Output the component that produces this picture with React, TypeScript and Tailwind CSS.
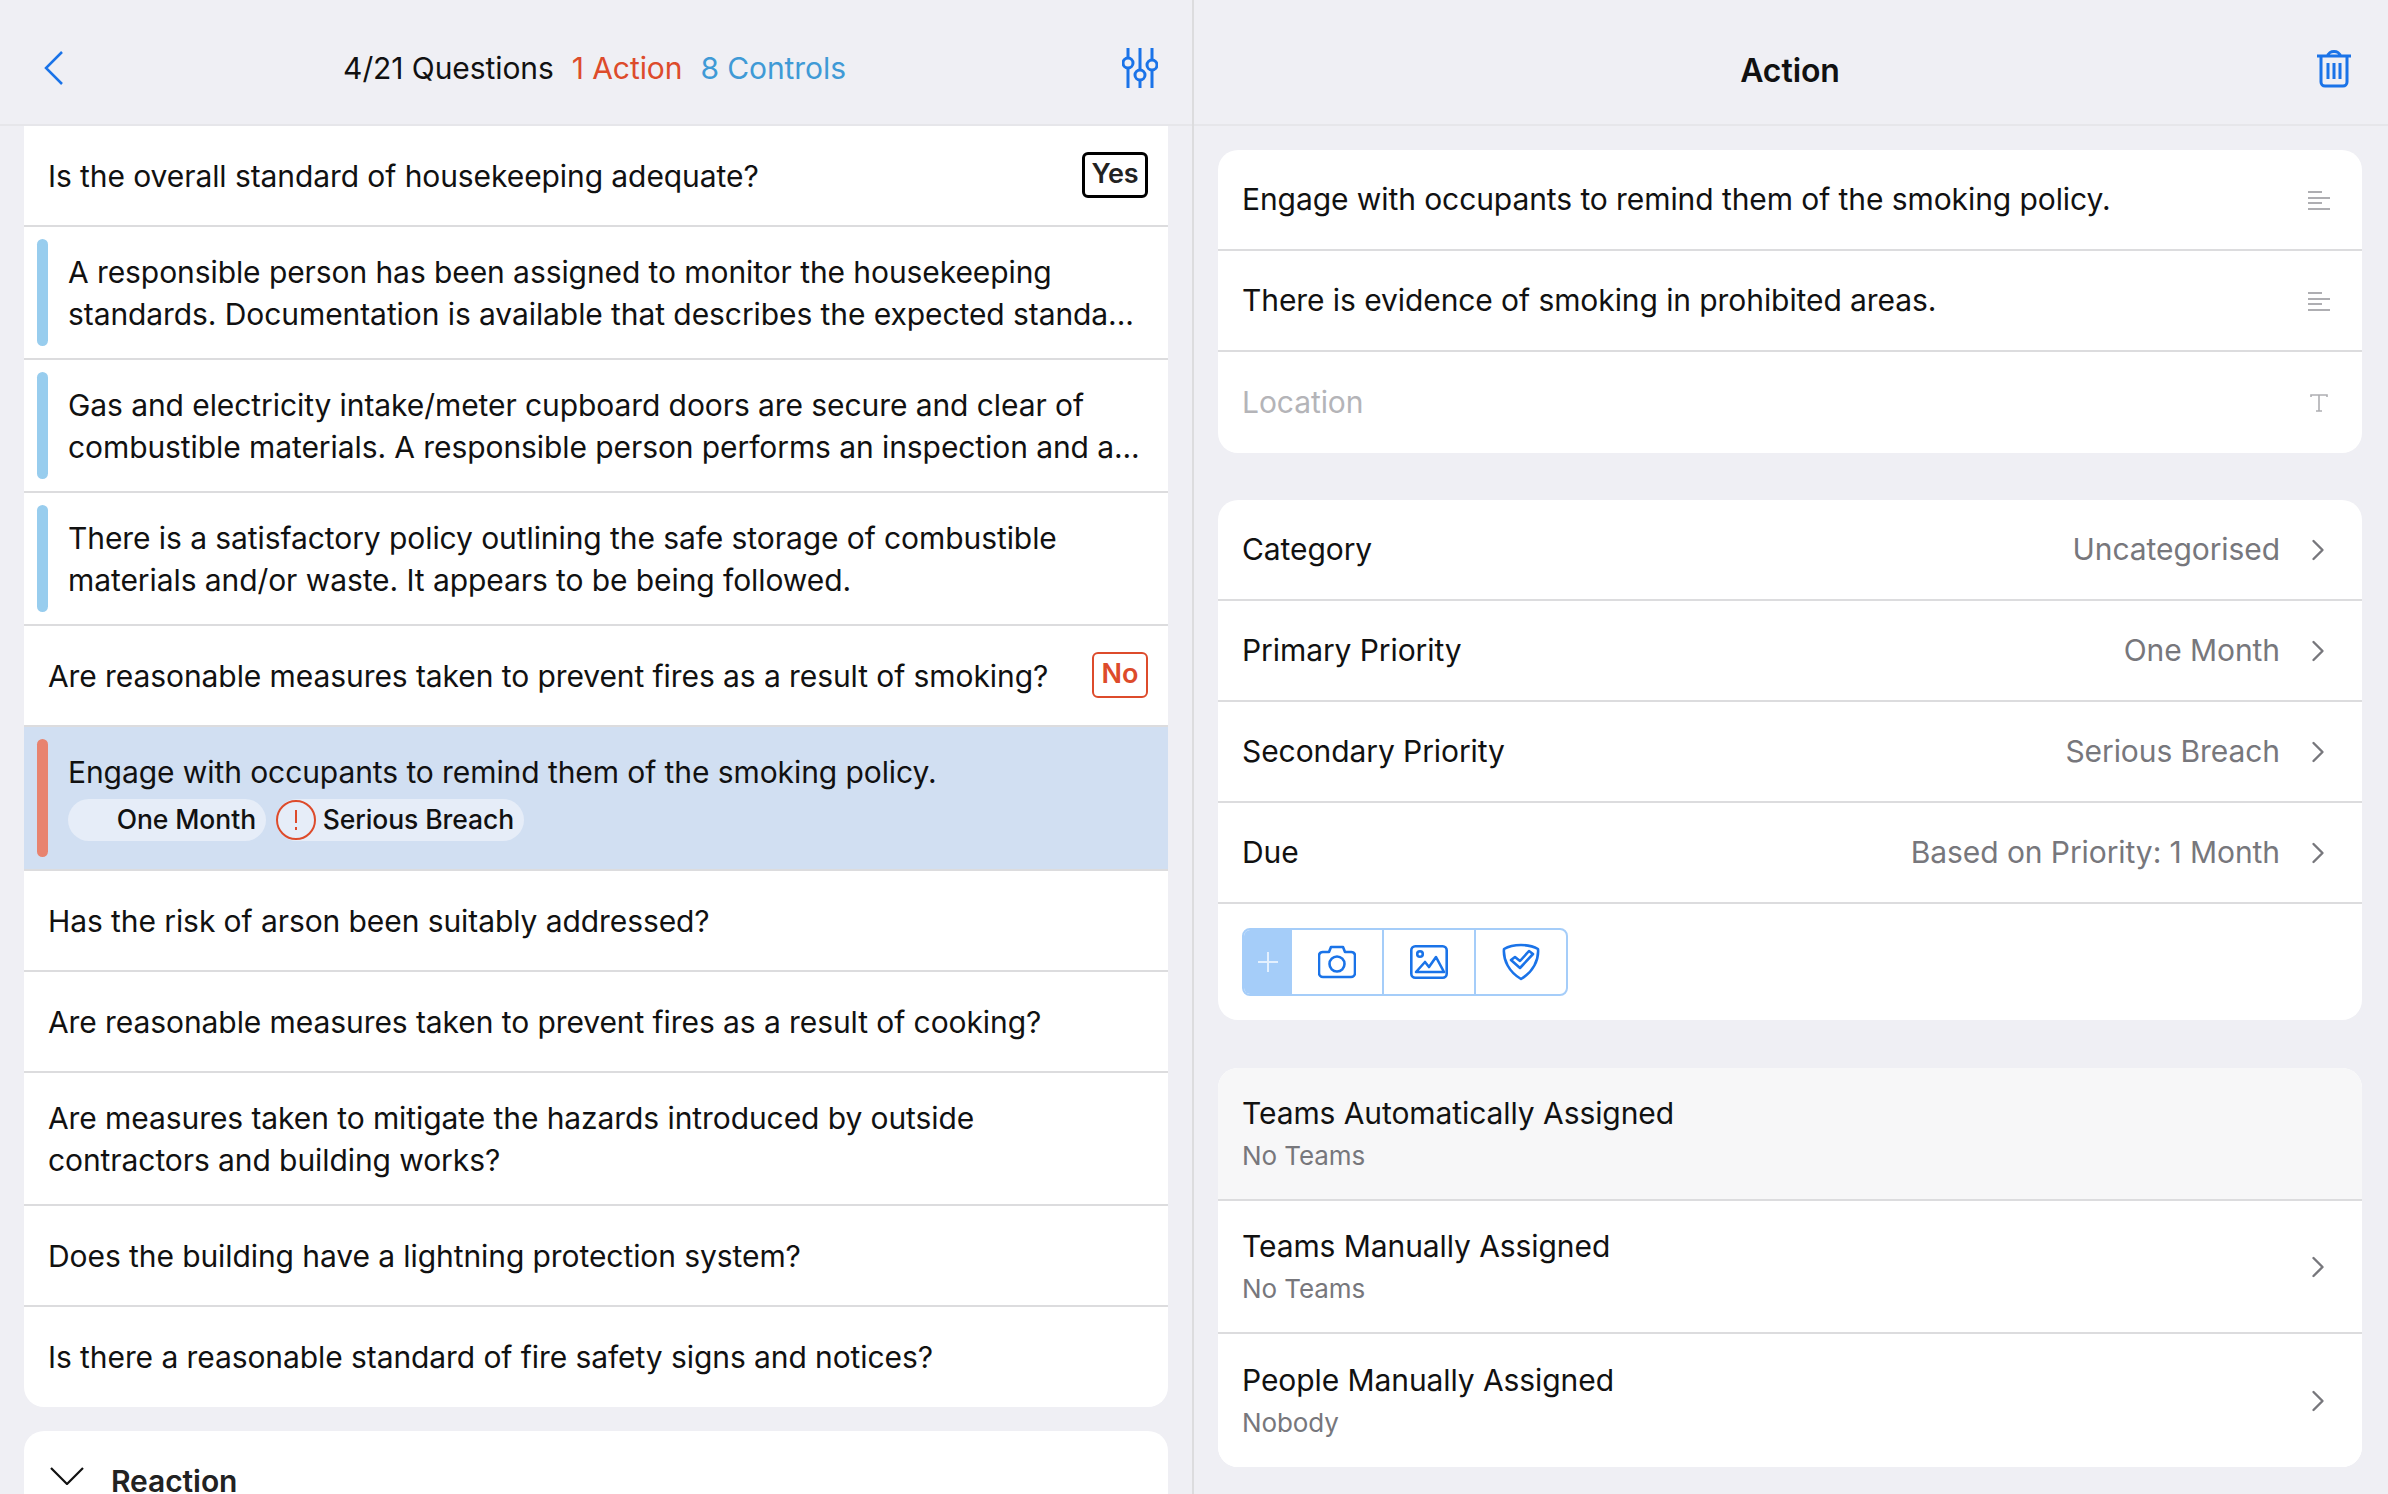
import { ChevronRight } from 'lucide-react';

const font = { fontFamily: 'Inter, "Noto Sans", sans-serif', letterSpacing: '-0.08px' };

function BarRow({ color, children, h = 'h-[133px]', bg = 'bg-white' }: { color: string; children: React.ReactNode; h?: string; bg?: string }) {
  return (
    <div className={`flex ${h} ${bg} items-stretch gap-[20px] border-b-2 border-[#dcdcde] py-[12px] pl-[13px] pr-[24px]`}>
      <div className={`w-[11px] shrink-0 rounded-full ${color}`} />
      {children}
    </div>
  );
}

function Question({ text, answer }: { text: string; answer?: 'Yes' | 'No' }) {
  return (
    <div className="flex h-[101px] items-center justify-between border-b-2 border-[#dcdcde] pl-[24px] pr-[20px] last:border-b-0">
      <p className="text-[30px] leading-[42px] text-[#111]">{text}</p>
      {answer === 'Yes' && (
        <span className="flex h-[46px] w-[66px] -translate-y-px items-center justify-center rounded-[6px] border-[3px] border-black text-[27px] font-semibold text-[#222]">Yes</span>
      )}
      {answer === 'No' && (
        <span className="flex h-[46px] w-[56px] -translate-y-px items-center justify-center rounded-[6px] border-[2.5px] border-[#dd4b2b] text-[27px] font-semibold text-[#dd4b2b]">No</span>
      )}
    </div>
  );
}

function Control({ lines }: { lines: string[] }) {
  return (
    <BarRow color="bg-[#98cdee]">
      <div className="flex flex-col justify-center text-[30px] leading-[42px] text-[#111]">
        {lines.map((l) => (
          <p key={l} className="whitespace-nowrap">{l}</p>
        ))}
      </div>
    </BarRow>
  );
}

function FieldRow({ text, muted, icon }: { text: string; muted?: boolean; icon: 'lines' | 'type' }) {
  return (
    <div className="flex h-[101px] items-center justify-between border-b-2 border-[#dcdcde] pl-[24px] pr-[32px] last:border-b-0">
      <p className={`text-[30px] ${muted ? 'text-[#b4b4b8]' : 'text-[#111]'}`}>{text}</p>
      {icon === 'lines' ? (
        <svg width="22" height="20" viewBox="0 0 22 20" stroke="#aeaeb2" strokeWidth="2">
          <path d="M0 2h14M0 8h22M0 13h14M0 19h22" />
        </svg>
      ) : (
        <svg width="18" height="18" viewBox="0 0 18 18" stroke="#aeaeb2" strokeWidth="1.6" fill="none" className="mr-[2px]">
          <path d="M1 3V1h16v2M9 1v16M6 17h6" />
        </svg>
      )}
    </div>
  );
}

function ValueRow({ label, value }: { label: string; value: string }) {
  return (
    <div className="flex h-[101px] items-center justify-between border-b-2 border-[#dcdcde] pl-[24px] pr-[26px]">
      <p className="text-[30px] text-[#111]">{label}</p>
      <div className="flex items-center gap-[20px]">
        <p className="text-[30px] text-[#77777c]">{value}</p>
        <ChevronRight size={36} strokeWidth={1.6} className="text-[#77777c]" />
      </div>
    </div>
  );
}

function TeamRow({ title, sub, chevron, bg = 'bg-white' }: { title: string; sub: string; chevron?: boolean; bg?: string }) {
  return (
    <div className={`flex h-[133px] items-center justify-between border-b-2 border-[#dcdcde] pl-[24px] pr-[26px] last:border-b-0 ${bg}`}>
      <div>
        <p className="text-[30px] leading-[42px] text-[#111]">{title}</p>
        <p className="mt-[2px] text-[26px] leading-[40px] text-[#77777c]">{sub}</p>
      </div>
      {chevron && <ChevronRight size={36} strokeWidth={1.6} className="text-[#77777c]" />}
    </div>
  );
}

export default function App() {
  return (
    <div className="flex h-[1494px] w-[2388px] overflow-hidden bg-[#efeff4]" style={font}>
      {/* left pane */}
      <div className="flex w-[1194px] shrink-0 flex-col border-r-2 border-[#dcdcde]">
        <header className="flex h-[126px] shrink-0 items-center justify-between border-b-2 border-[#e6e6ea] pl-[44px] pr-[34px] pt-[12px]">
          <svg width="20" height="36" viewBox="0 0 20 36" fill="none" stroke="#1a73e8" strokeWidth="2.5">
            <path d="M18 2 2 18l16 16" />
          </svg>
          <div className="ml-[3px] flex items-center gap-[18px] text-[30px] text-[#111]">
            <span>4/21 Questions</span>
            <span className="text-[#dd4b2b]">1 Action</span>
            <span className="text-[#3f9ad6]">8 Controls</span>
          </div>
          <svg width="36" height="40" viewBox="0 0 36 40" fill="none" stroke="#1a73e8" strokeWidth="3">
            <path d="M6 0v10M6 20v20M18 0v22M18 32v8M30 0v12M30 22v18" />
            <circle cx="6" cy="15" r="5" />
            <circle cx="18" cy="27" r="5" />
            <circle cx="30" cy="17" r="5" />
          </svg>
        </header>
        <div className="mx-[24px] flex flex-col rounded-b-[20px] bg-white">
          <Question text="Is the overall standard of housekeeping adequate?" answer="Yes" />
          <Control lines={['A responsible person has been assigned to monitor the housekeeping', 'standards. Documentation is available that describes the expected standa...']} />
          <Control lines={['Gas and electricity intake/meter cupboard doors are secure and clear of', 'combustible materials. A responsible person performs an inspection and a...']} />
          <Control lines={['There is a satisfactory policy outlining the safe storage of combustible', 'materials and/or waste. It appears to be being followed.']} />
          <Question text="Are reasonable measures taken to prevent fires as a result of smoking?" answer="No" />
          <BarRow color="bg-[#e8836f]" h="h-[144px]" bg="bg-[#d1dff2]">
            <div className="flex flex-col justify-center pb-[5px]">
              <p className="text-[30px] leading-[42px] text-[#111]">Engage with occupants to remind them of the smoking policy.</p>
              <div className="mt-[6px] flex items-center gap-[10px]">
                <span className="flex h-[42px] w-[198px] items-center justify-end rounded-full bg-[#e6edf8] pr-[10px] text-[26.5px] font-medium text-[#111]">One Month</span>
                <span className="relative flex h-[42px] w-[248px] items-center justify-end rounded-full bg-[#e6edf8] pr-[10px] text-[26.5px] font-medium text-[#111]">
                  <span className="absolute left-0 top-px flex h-[40px] w-[40px] items-center justify-center rounded-full border-[2.5px] border-[#dd4b2b] bg-transparent">
                    <span className="flex h-[20px] flex-col items-center justify-between">
                      <span className="h-[13px] w-[2px] bg-[#dd4b2b]" />
                      <span className="h-[3px] w-[2px] bg-[#dd4b2b]" />
                    </span>
                  </span>
                  Serious Breach
                </span>
              </div>
            </div>
          </BarRow>
          <Question text="Has the risk of arson been suitably addressed?" />
          <Question text="Are reasonable measures taken to prevent fires as a result of cooking?" />
          <div className="flex h-[133px] flex-col justify-center border-b-2 border-[#dcdcde] pl-[24px] text-[30px] leading-[42px] text-[#111]">
            <p>Are measures taken to mitigate the hazards introduced by outside</p>
            <p>contractors and building works?</p>
          </div>
          <Question text="Does the building have a lightning protection system?" />
          <div className="-mt-px">
            <Question text="Is there a reasonable standard of fire safety signs and notices?" />
          </div>
        </div>
        <div className="mx-[24px] mt-[24px] flex flex-1 items-start gap-[27px] rounded-t-[20px] bg-white pl-[26px] pt-[28px]">
          <svg width="34" height="18" viewBox="0 0 34 18" fill="none" stroke="#111" strokeWidth="2.2" className="mt-[8px]">
            <path d="M1 1l16 16L33 1" />
          </svg>
          <p className="text-[30px] font-semibold text-[#222]">Reaction</p>
        </div>
      </div>

      {/* right pane */}
      <div className="flex min-w-0 flex-1 flex-col">
        <header className="relative flex h-[126px] shrink-0 items-center justify-center border-b-2 border-[#e6e6ea] pr-[2px] pt-[18px]">
          <p className="text-[32px] font-semibold text-[#111]">Action</p>
          <svg width="34" height="38" viewBox="0 0 34 38" fill="none" stroke="#1a73e8" strokeWidth="3" className="absolute right-[37px] top-[50px]">
            <path d="M0 6h34M11 6c0-6 12-6 12 0M4 6v26a4 4 0 0 0 4 4h18a4 4 0 0 0 4-4V6M11 13v16M17 13v16M23 13v16" />
          </svg>
        </header>
        <div className="ml-[24px] mr-[26px] mt-[24px] overflow-hidden rounded-[20px] bg-white">
          <FieldRow text="Engage with occupants to remind them of the smoking policy." icon="lines" />
          <FieldRow text="There is evidence of smoking in prohibited areas." icon="lines" />
          <FieldRow text="Location" muted icon="type" />
        </div>
        <div className="ml-[24px] mr-[26px] mt-[47px] overflow-hidden rounded-[20px] bg-white">
          <ValueRow label="Category" value="Uncategorised" />
          <ValueRow label="Primary Priority" value="One Month" />
          <ValueRow label="Secondary Priority" value="Serious Breach" />
          <ValueRow label="Due" value="Based on Priority: 1 Month" />
          <div className="flex h-[116px] items-start pl-[24px] pt-[24px]">
            <div className="flex h-[68px] overflow-hidden rounded-[8px] border-2 border-[#a5cdf9]">
              <div className="flex w-[48px] items-center justify-center bg-[#a5cdf9]">
                <svg width="20" height="20" viewBox="0 0 20 20" stroke="#e4f0fe" strokeWidth="2"><path d="M10 0v20M0 10h20" /></svg>
              </div>
              <div className="flex w-[92px] items-center justify-center border-r-2 border-[#a5cdf9]">
                <svg width="38" height="34" viewBox="0 0 38 34" fill="none" stroke="#1a73e8" strokeWidth="2.6" strokeLinejoin="round">
                  <path d="M5 7h6l2-5h12l2 5h6a4 4 0 0 1 4 3v18a4 4 0 0 1-4 4H5a4 4 0 0 1-4-4V10a4 4 0 0 1 4-3z" />
                  <circle cx="19" cy="19" r="7.5" />
                </svg>
              </div>
              <div className="flex w-[92px] items-center justify-center border-r-2 border-[#a5cdf9]">
                <svg width="38" height="34" viewBox="0 0 38 34" fill="none" stroke="#1a73e8" strokeWidth="2.6" strokeLinejoin="round">
                  <rect x="1.3" y="1.3" width="35.4" height="31.4" rx="4" />
                  <circle cx="10" cy="9" r="2.8" />
                  <path d="M6 27l9-10 4 5 7-10 8 15z" />
                </svg>
              </div>
              <div className="flex w-[90px] items-center justify-center">
                <svg width="38" height="38" viewBox="0 0 38 38" fill="none" stroke="#1a73e8" strokeWidth="2.6" strokeLinejoin="round">
                  <path d="M19 2c6 0 12 1 17 4 1 11-5 23-17 30C7 29 1 17 2 6c5-3 11-4 17-4z" />
                  <path d="M9 17l9 8 13-14-4-3-9 10-5-4z" />
                </svg>
              </div>
            </div>
          </div>
        </div>
        <div className="ml-[24px] mr-[26px] mt-[48px] overflow-hidden rounded-[20px] bg-white">
          <TeamRow title="Teams Automatically Assigned" sub="No Teams" bg="bg-[#f7f7f8]" />
          <TeamRow title="Teams Manually Assigned" sub="No Teams" chevron />
          <TeamRow title="People Manually Assigned" sub="Nobody" chevron />
        </div>
      </div>
    </div>
  );
}
